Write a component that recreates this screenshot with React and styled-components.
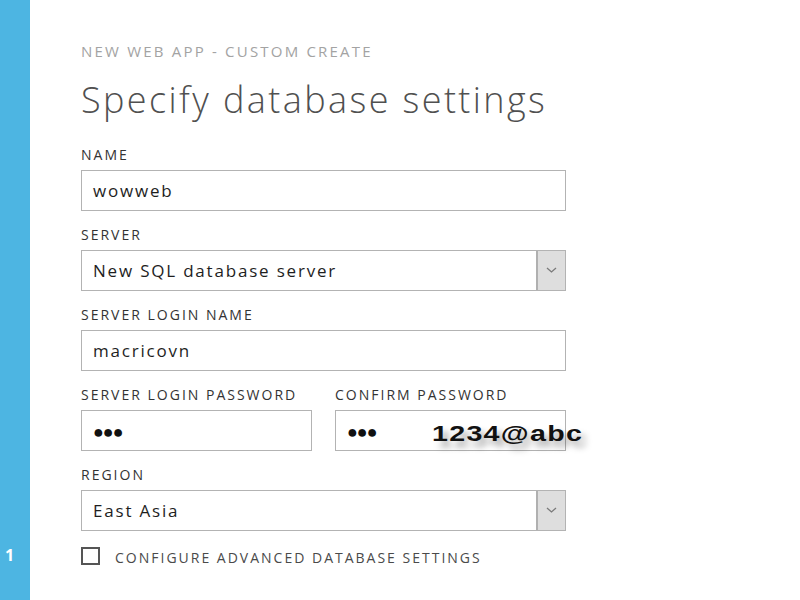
import React from 'react';
import styled, { createGlobalStyle } from 'styled-components';

const GlobalStyle = createGlobalStyle`
    html, body {
        margin: 0;
        padding: 0;
        background: #ffffff;
    }
    body {
        font-family: 'Open Sans', 'Noto Sans', sans-serif;
    }
`;

const Page = styled.div`
    display: flex;
    width: 800px;
    height: 600px;
    overflow: hidden;
    background: #ffffff;
`;

const Sidebar = styled.div`
    display: flex;
    flex-direction: column;
    justify-content: flex-end;
    width: 30px;
    height: 100%;
    padding: 0 0 36px 5px;
    box-sizing: border-box;
    background: #4db5e2;
    color: #ffffff;
    font-weight: 700;
    font-size: 16px;
    line-height: 18px;
`;

const Main = styled.div`
    display: flex;
    flex-direction: column;
    padding: 42px 0 0 51px;
`;

const Breadcrumb = styled.div`
    font-size: 15px;
    line-height: 18px;
    color: #a3a3a3;
    letter-spacing: 2.2px;
    white-space: nowrap;
`;

const Title = styled.h1`
    margin: 18px 0 0 0;
    font-size: 36px;
    line-height: 44px;
    font-weight: 300;
    color: #505050;
    letter-spacing: 2.4px;
    white-space: nowrap;
`;

const Form = styled.div`
    display: flex;
    flex-direction: column;
    width: 485px;
    margin-top: 25px;
`;

const Row = styled.div`
    display: flex;
    gap: 23px;
`;

const Field = styled.div`
    display: flex;
    flex-direction: column;
    flex: 1;
    margin-top: ${props => props.first ? 0 : 16}px;
`;

const Label = styled.label`
    font-size: 14px;
    line-height: 16px;
    font-weight: 500;
    color: #333333;
    margin-bottom: 7px;
    letter-spacing: 2px;
    white-space: nowrap;
`;

const Box = styled.div`
    position: relative;
    display: flex;
    align-items: center;
    height: 41px;
    box-sizing: border-box;
    border: 1px solid #b3b3b3;
    padding-left: 11px;
    font-size: 17px;
    letter-spacing: 1.8px;
    color: #1e1e1e;
    background: #ffffff;
`;

const Dots = styled.span`
    font-size: 18px;
    font-weight: 700;
    letter-spacing: -1px;
    color: #111;
`;

const SelectBox = styled(Box)`
    padding-right: 0;
`;

const SelectText = styled.span`
    flex: 1;
`;

const ArrowButton = styled.div`
    display: flex;
    align-items: center;
    justify-content: center;
    align-self: stretch;
    width: 27px;
    background: #dedede;
    border-left: 2px solid #b0b0b0;
`;

const Overlay = styled.span`
    position: absolute;
    left: 96px;
    top: 10px;
    font-family: 'Liberation Sans', Arial, sans-serif;
    font-weight: 700;
    font-size: 22px;
    letter-spacing: 1px;
    color: #111;
    white-space: nowrap;
    transform: scaleX(1.3);
    transform-origin: left center;
    text-shadow: 4px 6px 6px rgba(0, 0, 0, 0.35);
`;

const CheckRow = styled.div`
    display: flex;
    align-items: center;
    gap: 15px;
    margin-top: 14px;
`;

const CheckBox = styled.div`
    width: 19px;
    height: 18px;
    box-sizing: border-box;
    border: 2px solid #555;
    background: #fff;
`;

const CheckLabel = styled.span`
    font-size: 14px;
    line-height: 18px;
    color: #4a4a4a;
    letter-spacing: 2px;
    margin-top: 4px;
    white-space: nowrap;
`;

const Chevron = () => (
    <svg width="11" height="7" viewBox="0 0 11 7">
        <path d="M1 1 L5.5 5 L10 1" fill="none" stroke="#7a7a7a" strokeWidth="1.3" />
    </svg>
);

const Select = ({ value }) => (
    <SelectBox>
        <SelectText>{value}</SelectText>
        <ArrowButton><Chevron /></ArrowButton>
    </SelectBox>
);

const App = () => {
    return <>
        <GlobalStyle />
        <Page>
            <Sidebar>1</Sidebar>
            <Main>
                <Breadcrumb>NEW WEB APP - CUSTOM CREATE</Breadcrumb>
                <Title>Specify database settings</Title>
                <Form>
                    <Field first>
                        <Label>NAME</Label>
                        <Box>wowweb</Box>
                    </Field>
                    <Field>
                        <Label>SERVER</Label>
                        <Select value="New SQL database server" />
                    </Field>
                    <Field>
                        <Label>SERVER LOGIN NAME</Label>
                        <Box>macricovn</Box>
                    </Field>
                    <Row>
                        <Field>
                            <Label>SERVER LOGIN PASSWORD</Label>
                            <Box><Dots>●●●</Dots></Box>
                        </Field>
                        <Field>
                            <Label>CONFIRM PASSWORD</Label>
                            <Box>
                                <Dots>●●●</Dots>
                                <Overlay>1234@abc</Overlay>
                            </Box>
                        </Field>
                    </Row>
                    <Field>
                        <Label>REGION</Label>
                        <Select value="East Asia" />
                    </Field>
                    <CheckRow>
                        <CheckBox />
                        <CheckLabel>CONFIGURE ADVANCED DATABASE SETTINGS</CheckLabel>
                    </CheckRow>
                </Form>
            </Main>
        </Page>
    </>
}

export default App;
